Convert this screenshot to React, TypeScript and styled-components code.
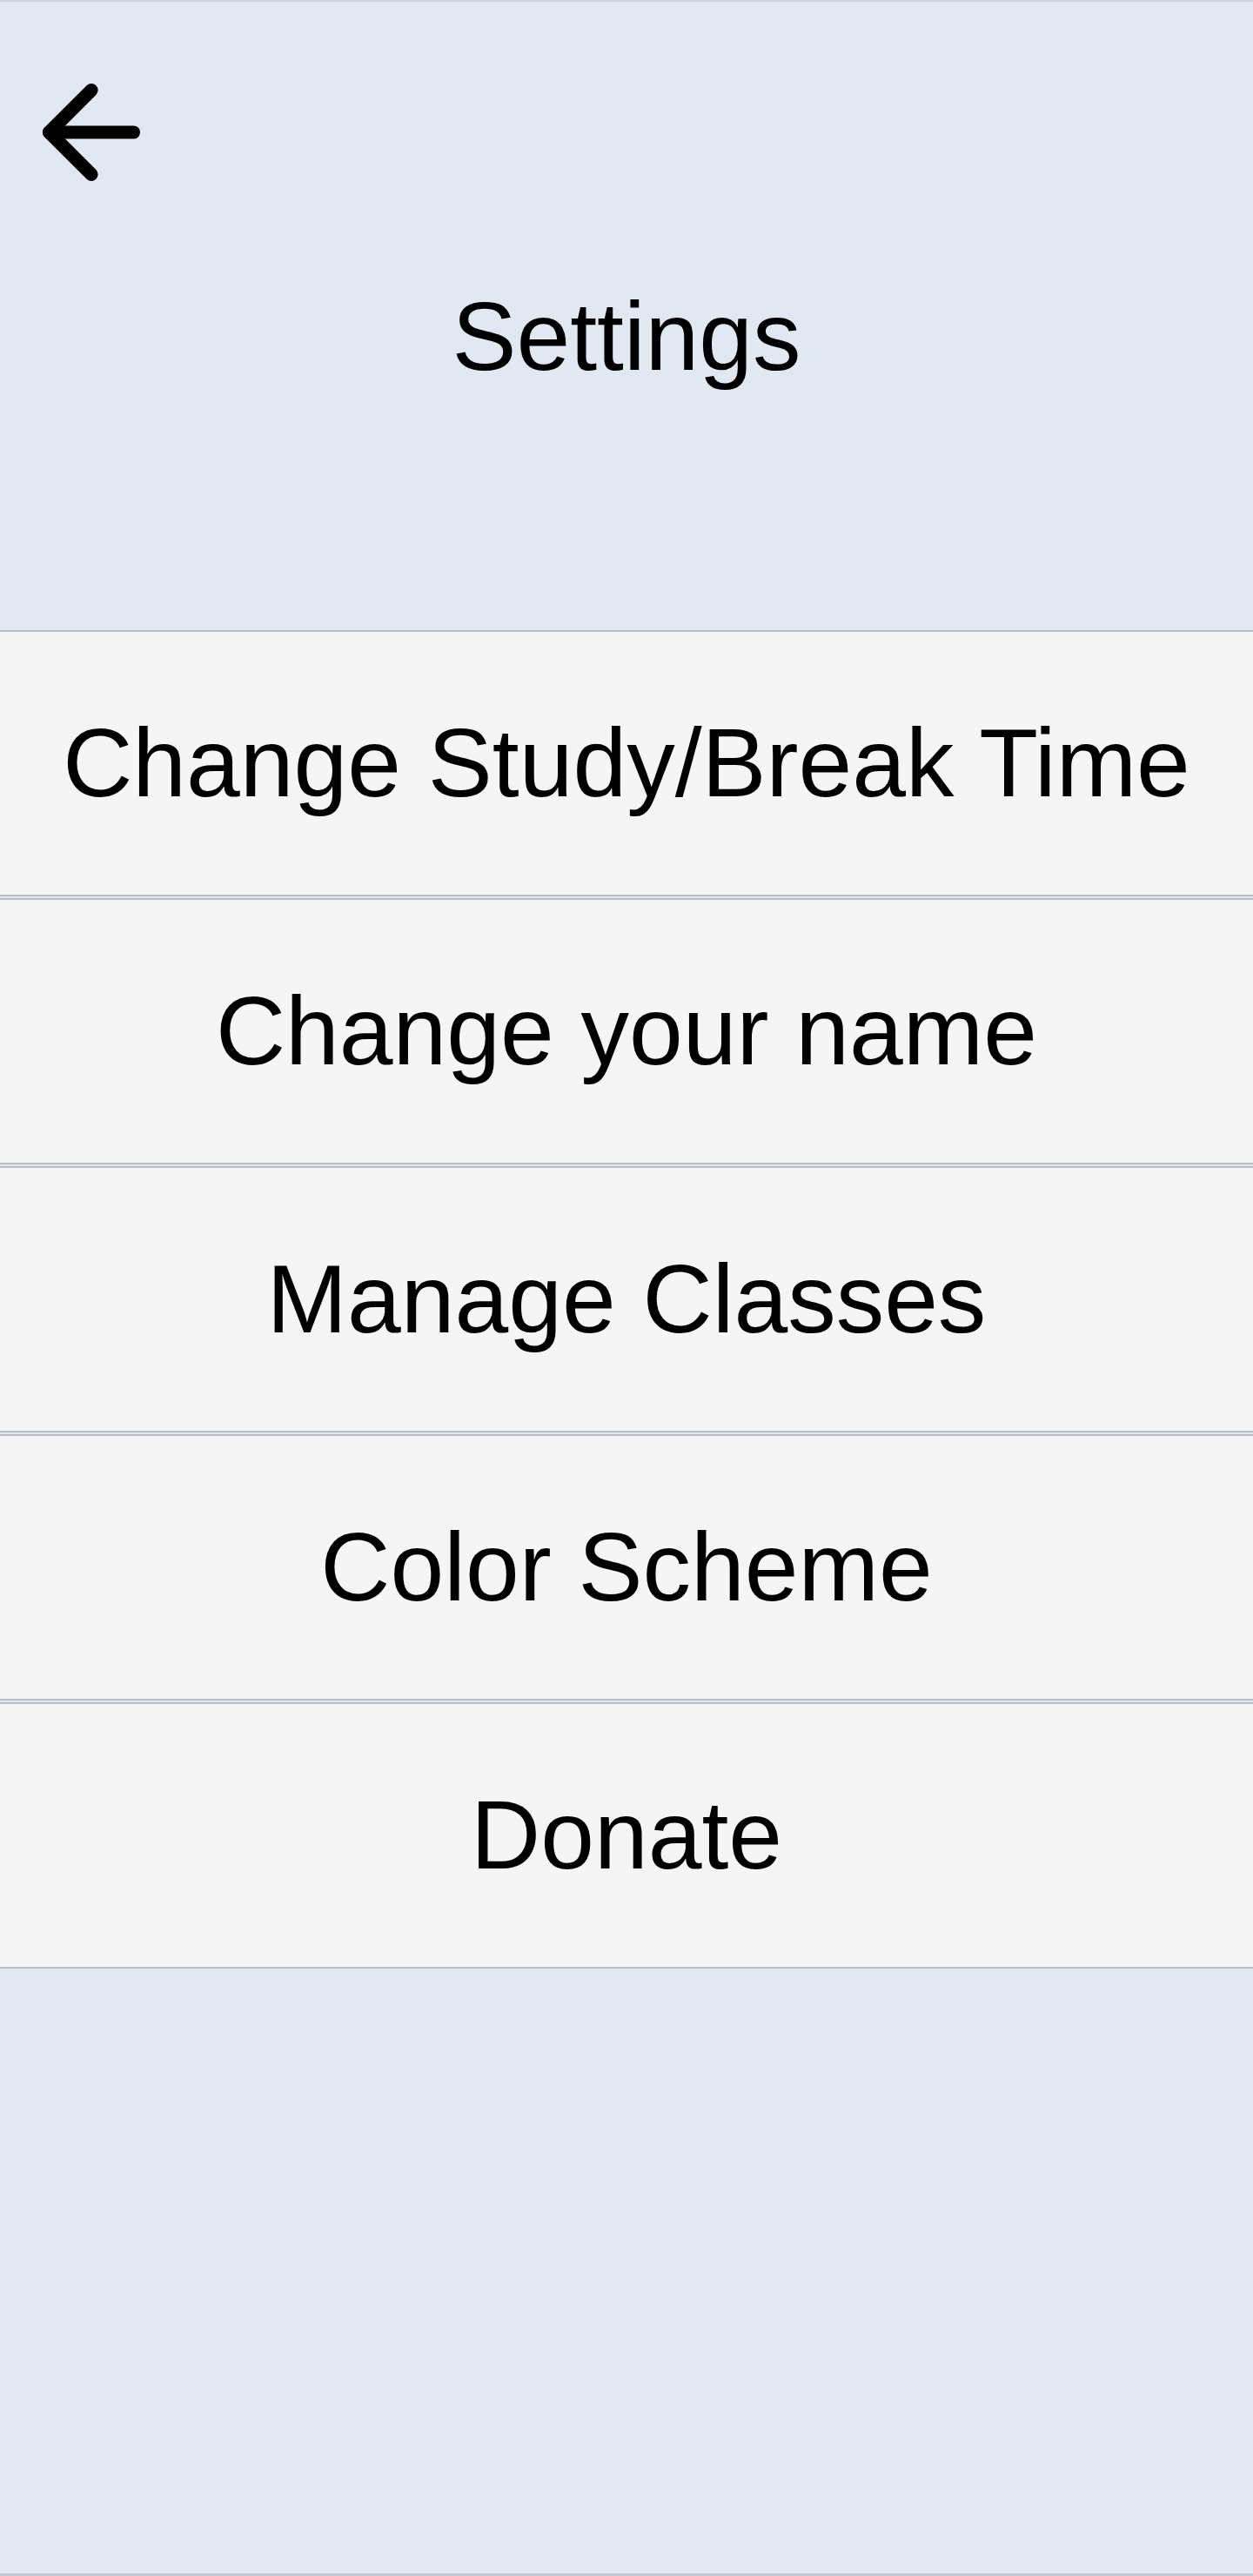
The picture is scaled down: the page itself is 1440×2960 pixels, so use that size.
import React from "react";
import styled, { createGlobalStyle } from "styled-components";

const GlobalStyle = createGlobalStyle`
  html, body {
    margin: 0;
    padding: 0;
    background: #e1e8f1;
  }
  * { box-sizing: border-box; }
`;

const Screen = styled.div`
  width: 1440px;
  height: 2960px;
  background: #e1e8f1;
  border-top: 2px solid #cdd3db;
  border-bottom: 3px solid #c4c8ce;
  font-family: "Liberation Sans", Arial, sans-serif;
  color: #000;
  display: flex;
  flex-direction: column;
`;

const Header = styled.header`
  height: 722px;
  display: flex;
  flex-direction: column;
`;

const BackButton = styled.button`
  align-self: flex-start;
  margin: 67px 0 0 22px;
  padding: 0;
  border: none;
  background: transparent;
  width: 166px;
  height: 166px;
  display: flex;
  cursor: pointer;
`;

const Title = styled.h1`
  margin: 88px 0 0;
  font-size: 111px;
  font-weight: 400;
  line-height: 128px;
  text-align: center;
`;

const List = styled.nav`
  display: flex;
  flex-direction: column;
  gap: 2px;
`;

const Row = styled.button`
  height: 306px;
  width: 100%;
  border: none;
  border-top: 2px solid #b9bec5;
  border-bottom: 2px solid #b9bec5;
  background: #f5f5f5;
  font-family: "Liberation Sans", Arial, sans-serif;
  font-size: 111px;
  color: #000;
  display: flex;
  align-items: center;
  justify-content: center;
  padding: 0;
  cursor: pointer;
`;

const items = [
  "Change Study/Break Time",
  "Change your name",
  "Manage Classes",
  "Color Scheme",
  "Donate",
];

function ArrowLeftIcon() {
  return (
    <svg width="166" height="166" viewBox="0 0 24 24" fill="none" stroke="#000" strokeWidth="2.2" strokeLinecap="round" strokeLinejoin="round">
      <path d="M19 12H5" />
      <path d="M12 19l-7-7 7-7" />
    </svg>
  );
}

export default function App() {
  return (
    <>
      <GlobalStyle />
      <Screen>
        <Header>
          <BackButton aria-label="Back">
            <ArrowLeftIcon />
          </BackButton>
          <Title>Settings</Title>
        </Header>
        <List>
          {items.map((t) => (
            <Row key={t}>{t}</Row>
          ))}
        </List>
      </Screen>
    </>
  );
}
